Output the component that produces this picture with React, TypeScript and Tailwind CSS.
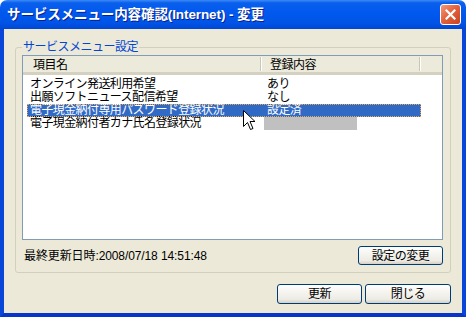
import React from "react";

const font = "font-['Liberation_Sans','Noto_Sans_CJK_JP',sans-serif]";

type Row = { name: string; value?: string; selected?: boolean; blank?: boolean };

const rows: Row[] = [
  { name: "オンライン発送利用希望", value: "あり" },
  { name: "出願ソフトニュース配信希望", value: "なし" },
  { name: "電子現金納付専用パスワード登録状況", value: "設定済", selected: true },
  { name: "電子現金納付者カナ氏名登録状況", blank: true },
];

function XpButton({ label, className }: { label: string; className: string }) {
  return (
    <button
      className={`${className} flex items-center justify-center rounded-[3px] border border-[#003C74] bg-[linear-gradient(to_bottom,#FFFFFF_0%,#F5F4EF_40%,#ECEBE6_80%,#D6D0C5_100%)] text-[12px] leading-none text-black tracking-[-0.5px]`}
    >
      {label}
    </button>
  );
}

function HeaderDivider() {
  return (
    <div className="flex h-[14px] self-center">
      <div className="w-[1px] bg-[#CBC7B8]" />
      <div className="w-[1px] bg-white" />
    </div>
  );
}

export default function App() {
  return (
    <div className={`relative h-[317px] w-[466px] bg-white ${font}`}>
      <div className="flex h-full flex-col overflow-hidden rounded-t-[7px]">
        {/* title bar */}
        <div className="flex h-[29px] shrink-0 items-center bg-[linear-gradient(to_bottom,#3D8BF7_0%,#0A5FEC_10%,#0058EE_45%,#0054E6_80%,#0046D5_100%)] pl-[7px] pr-[5px]">
          <span className="text-[13.5px] font-bold leading-none tracking-[-0.1px] text-white [text-shadow:1px_1px_0_#0A1F8F]">
            サービスメニュー内容確認(Internet) - 変更
          </span>
          <div className="ml-auto flex h-[21px] w-[21px] items-center justify-center rounded-[3px] border border-white bg-[linear-gradient(to_bottom_right,#F39A7E_0%,#E4633F_45%,#C9421D_100%)]">
            <svg width="11" height="11" viewBox="0 0 11 11">
              <path d="M1.5 1.5 L9.5 9.5 M9.5 1.5 L1.5 9.5" stroke="white" strokeWidth="2.2" strokeLinecap="square" />
            </svg>
          </div>
        </div>

        {/* client area */}
        <div className="flex flex-1 flex-col border-x-4 border-b-4 border-x-[#0846D8] border-b-[#0735C9] bg-[#ECE9D8] px-[11px] pt-[11px]">
          <fieldset className="rounded-[3px] border border-[#D0D0BF] pb-[7px] pl-[6px] pr-[7px]">
            <legend className="px-[1px] text-[12px] leading-[14px] tracking-[-0.5px] text-[#0046D5]">
              サービスメニュー設定
            </legend>

            {/* list view */}
            <div className="mt-[1px] h-[185px] border border-[#7F9DB9] bg-white">
              <div className="flex h-[19px] border-b-[3px] border-b-[#D5D1C0] bg-[#EBEADB] text-[12px] leading-none tracking-[-0.5px] text-black">
                <div className="flex w-[237px] items-center pl-[10px] pt-[2px]">項目名</div>
                <HeaderDivider />
                <div className="flex w-[157px] items-center pl-[8px] pt-[2px]">登録内容</div>
                <HeaderDivider />
              </div>
              <div className="pt-[3px]">
                {rows.map((r) => (
                  <div
                    key={r.name}
                    className={`ml-[4px] flex h-[13px] w-[394px] text-[12px] leading-[13px] tracking-[-0.6px] ${
                      r.selected
                        ? "bg-[#316AC5] text-white outline-1 -outline-offset-1 outline-dotted outline-[#E8A850]"
                        : "text-black"
                    }`}
                  >
                    <div className="w-[233px] whitespace-nowrap pl-[3px]">{r.name}</div>
                    <div className="flex flex-1">
                      {r.blank ? (
                        <div className="ml-[4px] h-full w-[93px] bg-[#C0C0C0]" />
                      ) : (
                        <div className="pl-[7px]">{r.value}</div>
                      )}
                    </div>
                  </div>
                ))}
              </div>
            </div>

            <div className="mt-[6px] flex h-[19px] items-center">
              <span className="pl-[2px] text-[12px] leading-none tracking-[-0.1px] text-black">
                最終更新日時:2008/07/18 14:51:48
              </span>
              <XpButton label="設定の変更" className="ml-auto h-[19px] w-[85px]" />
            </div>
          </fieldset>

          <div className="mt-[11px] flex justify-end gap-[3px]">
            <XpButton label="更新" className="h-[20px] w-[85px]" />
            <XpButton label="閉じる" className="h-[20px] w-[86px]" />
          </div>
        </div>
      </div>

      {/* mouse pointer */}
      <svg className="absolute left-[243px] top-[110px]" width="13" height="21" viewBox="0 0 13 21">
        <path
          d="M0.5 0.5 L0.5 16.5 L4.5 12.5 L7.5 19.5 L10 18.5 L7 11.5 L12 11.5 Z"
          fill="white"
          stroke="black"
          strokeWidth="1"
          strokeLinejoin="miter"
        />
      </svg>
    </div>
  );
}
